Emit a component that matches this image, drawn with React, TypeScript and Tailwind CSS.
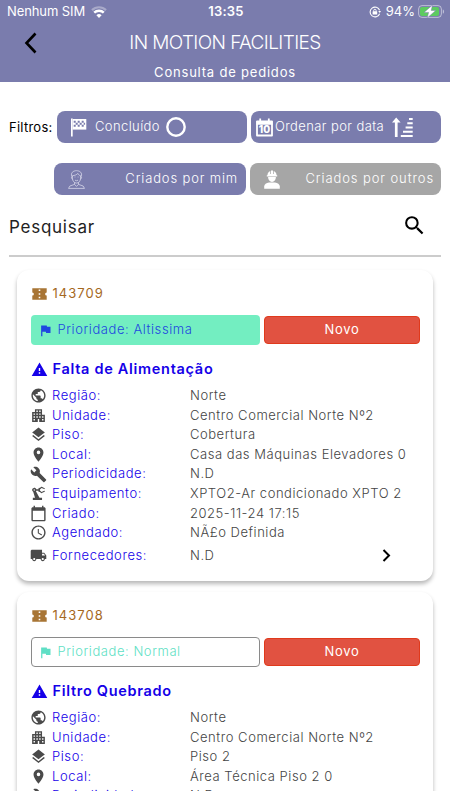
import type { ReactNode } from 'react';
import type { IconType } from 'react-icons';
import {
  MdAccessTime,
  MdApartment,
  MdBuild,
  MdCalendarToday,
  MdFlag,
  MdLayers,
  MdLocalShipping,
  MdPlace,
  MdPrecisionManufacturing,
  MdPublic,
  MdSearch,
  MdWarning,
} from 'react-icons/md';

interface Order {
  id: string;
  priority: string;
  urgent: boolean;
  title: string;
  values: string[];
}

const fields: { label: string; Icon: IconType }[] = [
  { label: 'Região:', Icon: MdPublic },
  { label: 'Unidade:', Icon: MdApartment },
  { label: 'Piso:', Icon: MdLayers },
  { label: 'Local:', Icon: MdPlace },
  { label: 'Periodicidade:', Icon: MdBuild },
  { label: 'Equipamento:', Icon: MdPrecisionManufacturing },
  { label: 'Criado:', Icon: MdCalendarToday },
  { label: 'Agendado:', Icon: MdAccessTime },
  { label: 'Fornecedores:', Icon: MdLocalShipping },
];

const orders: Order[] = [
  {
    id: '143709',
    priority: 'Altissima',
    urgent: true,
    title: 'Falta de Alimentação',
    values: [
      'Norte',
      'Centro Comercial Norte Nº2',
      'Cobertura',
      'Casa das Máquinas Elevadores 0',
      'N.D',
      'XPTO2-Ar condicionado XPTO 2',
      '2025-11-24 17:15',
      'NÃ£o Definida',
      'N.D',
    ],
  },
  {
    id: '143708',
    priority: 'Normal',
    urgent: false,
    title: 'Filtro Quebrado',
    values: ['Norte', 'Centro Comercial Norte Nº2', 'Piso 2', 'Área Técnica Piso 2 0', 'N.D'],
  },
];

function WifiIcon() {
  return (
    <svg width="16" height="12" viewBox="0 0 16 12" fill="none">
      <path d="M1 4.1a10 10 0 0 1 14 0" stroke="#fff" strokeOpacity=".35" strokeWidth="2.2" />
      <path d="M3.2 6.7a6.8 6.8 0 0 1 9.6 0" stroke="#fff" strokeWidth="2.4" />
      <path d="M8 12 5.4 9.3a3.7 3.7 0 0 1 5.2 0Z" fill="#fff" />
    </svg>
  );
}

function RotationLockIcon() {
  return (
    <svg width="12" height="12" viewBox="0 0 12 12" fill="none" stroke="#fff">
      <path d="M10.6 7.7A4.9 4.9 0 1 1 10.6 4.3" strokeWidth="1.1" />
      <path d="M9.2 5h2.8l-1.2 2Z" fill="#fff" stroke="none" />
      <rect x="3.6" y="5.2" width="4.6" height="3.4" rx=".5" fill="#fff" stroke="none" />
      <path d="M4.7 5.6V4.5a1.2 1.2 0 0 1 2.4 0v1.1" strokeWidth=".9" />
    </svg>
  );
}

function BatteryIcon() {
  return (
    <svg width="27" height="13" viewBox="0 0 27 13">
      <rect x=".6" y=".6" width="22.8" height="11.8" rx="3.4" fill="none" stroke="#fff" strokeOpacity=".5" />
      <rect x="2" y="2" width="19" height="9" rx="2" fill="#5ccb5f" />
      <path d="M24.8 4.4c1.7.5 1.7 3.7 0 4.2Z" fill="#fff" fillOpacity=".5" />
      <path d="M14.5 0 6 7.4h4.6L9.2 13l8.6-7.6h-4.6Z" fill="#fff" stroke="#7a7cad" strokeWidth=".5" />
    </svg>
  );
}

function CheckeredFlagIcon() {
  return (
    <svg width="16" height="19" viewBox="0 0 16 19" fill="#fff">
      <path d="M0 .6h1.7v17.8H0Z" />
      <path d="M1.7 1h13.6v10.6H1.7Z" />
      <g fill="#7a7cad">
        <path d="M2.7 2.8h2v2h-2ZM6.7 2.8h2v2h-2ZM10.7 2.8h2v2h-2ZM4.7 4.8h2v2h-2ZM8.7 4.8h2v2h-2ZM12.7 4.8h1.4v2h-1.4ZM2.7 6.8h2v2h-2ZM6.7 6.8h2v2h-2ZM10.7 6.8h2v2h-2Z" />
      </g>
    </svg>
  );
}

function DateIcon() {
  return (
    <span className="relative flex h-[19px] w-[17px] shrink-0 items-end justify-center">
      <svg className="absolute inset-0" width="17" height="19" viewBox="0 0 17 19" fill="none">
        <path d="M1 3.5h15v14H1Z" stroke="#fff" strokeWidth="1.8" strokeLinejoin="round" />
        <path d="M.5 3h16v3.7H.5ZM3.3.4h1.8V4H3.3ZM11.9.4h1.8V4h-1.8Z" fill="#fff" />
      </svg>
      <span className="relative mb-[3px] text-[10px] leading-[9px] font-extrabold tracking-normal">10</span>
    </span>
  );
}

function SortIcon() {
  return (
    <svg width="22" height="21" viewBox="0 0 22 21" fill="#fff">
      <path d="M4.2.5 8.6 5.4H5.6v14.7H2.9V5.4H0Z" />
      <path d="M17 1h3.7v2H17ZM15.3 5.2h5.4v2h-5.4ZM13.6 9.4h7.1v2h-7.1ZM11 13.7h9.7v2H11ZM8.8 18h11.9v2.1H8.8Z" />
    </svg>
  );
}

function PersonIcon() {
  return (
    <svg width="17" height="19" viewBox="0 0 17 19" fill="none" stroke="#d6d6e8" strokeWidth=".8">
      <path d="M3.7 6.3C2.6 3 5 .7 8.4.7c3.7 0 5.9 2.1 5 5.6" />
      <path d="M4.4 5.7v2.5c0 2.7 1.9 4.9 4.1 4.9s4.1-2.2 4.1-4.9V5.7C11 5.5 10.4 4.4 9.9 3.4 8.8 4.8 6.7 5.5 4.4 5.7Z" />
      <path d="M4.4 6.4c-1.3-.2-1.3 2.6.2 2.6M12.6 6.4c1.3-.2 1.3 2.6-.2 2.6M6.6 7h.8M9.7 7h.8M7 10.2q1.5 1 3 0" />
      <path d="M6.5 12.4v2L1.9 16 .5 18.4h16L15.1 16l-4.6-1.6v-2M6.5 14.4l2 2 2-2" />
    </svg>
  );
}

function WorkerIcon() {
  return (
    <svg width="16" height="19" viewBox="0 0 16 19" fill="#fff">
      <path d="M3.5 5.2A4.6 4.6 0 0 1 6.3.9V4h.7V.4h2V4h.7V.9a4.6 4.6 0 0 1 2.8 4.3h.7v1.2H2.8V5.2Z" />
      <path d="M4.1 7.1h7.8C11.9 9.8 10.1 12 8 12S4.1 9.8 4.1 7.1Z" />
      <path d="M.2 18.8v-2.4c0-2.3 2.2-3.5 4.8-4h6c2.6.5 4.8 1.7 4.8 4v2.4Z" />
    </svg>
  );
}

function TicketIcon() {
  return (
    <svg className="mr-[6px] ml-px" width="15" height="12" viewBox="0 0 15 12" fill="#a87535">
      <path
        fillRule="evenodd"
        d="M.3.2h14.4v4.2a1.6 1.6 0 0 0 0 3.2v4.2H.3V7.6a1.6 1.6 0 0 0 0-3.2ZM6.7 1.6v1.5h1.6V1.6ZM6.7 5.2v1.5h1.6V5.2ZM6.7 8.8v1.5h1.6V8.8Z"
      />
    </svg>
  );
}

function FilterButton({ className, children }: { className: string; children: ReactNode }) {
  return (
    <button className={`flex h-8 items-center rounded-lg text-[13px] text-white ${className}`}>
      {children}
    </button>
  );
}

function OrderCard({ order }: { order: Order }) {
  return (
    <div className="h-[311px] shrink-0 rounded-xl bg-white pt-[14px] pr-[13px] pl-[13.5px] shadow-[0_3px_4px_rgba(0,0,0,0.28)]">
      <div className="flex h-5 items-center text-[13px] tracking-[1.05px] text-[#a5681e]">
        <TicketIcon />
        {order.id}
      </div>

      <div className="mt-[11px] flex h-[30px] items-center gap-1">
        <div
          className={`flex h-[30px] w-[229px] items-center rounded text-[13px] font-light tracking-[0.56px] ${
            order.urgent ? 'bg-[#73eec1] pl-2 text-[#1f47e0]' : 'border border-[#8a8a8a] pl-[7px] text-[#5fdfc5]'
          }`}
        >
          <MdFlag className="mr-[5px] -ml-px size-[15px]" />
          Prioridade: {order.priority}
        </div>
        <div className="flex h-7 w-[156px] items-center justify-center rounded border border-[#e03a1c] bg-[#e15241] pl-px text-[13px] tracking-[0.65px] text-white">
          Novo
        </div>
      </div>

      <div className="mt-[14px] flex h-5 items-center text-[14.5px] font-semibold tracking-[0.7px] text-[#1500e8]">
        <MdWarning className="mr-[5px] size-[17px]" />
        {order.title}
      </div>

      <div className="mt-[7px]">
        {order.values.map((value, i) => {
          const { label, Icon } = fields[i];
          return (
            <div key={label} className="flex h-[19.6px] items-center text-[13px] font-light last:nth-9:mt-[3px]">
              <Icon className="mr-[5px] -ml-[0.5px] size-[17px] text-[#4a4a4a]" />
              <span className="w-[138px] tracking-[0.58px] text-[#1500e8]">{label}</span>
              <span className="tracking-[0.54px] whitespace-nowrap text-[#444]">{value}</span>
              {i === 8 && (
                <svg className="mr-[29px] ml-auto" width="9" height="13" viewBox="0 0 9 13" fill="none">
                  <path d="m1.5 1 5.5 5.5L1.5 12" stroke="#000" strokeWidth="2" />
                </svg>
              )}
            </div>
          );
        })}
      </div>
    </div>
  );
}

export default function App() {
  return (
    <div className="h-[800px] w-[450px] overflow-hidden bg-white font-['Inter','Liberation_Sans',sans-serif]">
      {/* Header */}
      <header className="h-[82px] bg-[#7a7cad] text-white">
        <div className="grid h-[23px] grid-cols-3 items-center pr-[5px] pl-[7px] text-[13px]">
          <div className="flex items-center gap-1.5 tracking-[-0.1px]">
            Nenhum SIM
            <WifiIcon />
          </div>
          <div className="text-center font-semibold tracking-[0.2px]">13:35</div>
          <div className="flex items-center justify-end">
            <RotationLockIcon />
            <span className="mr-[3px] ml-[5px]">94%</span>
            <BatteryIcon />
          </div>
        </div>
        <div className="grid h-10 grid-cols-[60px_1fr_60px] items-center">
          <button className="pl-6">
            <svg width="14" height="22" viewBox="0 0 14 22" fill="none">
              <path d="m11.5 1.5-9 9.5 9 9.5" stroke="#000" strokeWidth="2.6" />
            </svg>
          </button>
          <h1 className="text-center text-[19px] font-light tracking-[-0.6px]">IN MOTION FACILITIES</h1>
        </div>
        <p className="text-center text-[13px] leading-[18px] tracking-[0.8px]">Consulta de pedidos</p>
      </header>

      {/* Filters */}
      <div className="mt-[29px] flex items-center pl-[9px]">
        <span className="w-12 pt-px text-[13px] tracking-[0.25px] whitespace-nowrap text-black">Filtros:</span>
        <FilterButton className="w-[190px] bg-[#7a7cad] pl-3.5 font-light tracking-[0.4px]">
          <CheckeredFlagIcon />
          <span className="mr-1.5 ml-2">Concluído</span>
          <svg width="20" height="20" viewBox="0 0 20 20">
            <circle cx="10" cy="10" r="8.7" fill="none" stroke="#fff" strokeWidth="2.4" />
          </svg>
        </FilterButton>
        <FilterButton className="ml-1 w-[190px] bg-[#7a7cad] pl-[5px] font-light tracking-[0.4px]">
          <DateIcon />
          <span className="mr-2 ml-[2px] whitespace-nowrap">Ordenar por data</span>
          <SortIcon />
        </FilterButton>
      </div>
      <div className="mt-5 flex pl-[54px]">
        <FilterButton className="w-[192px] justify-between bg-[#7a7cad] pr-2 pl-3.5 font-light tracking-[0.85px]">
          <PersonIcon />
          Criados por mim
        </FilterButton>
        <FilterButton className="ml-1 w-[191px] justify-between bg-[#a6a6a6] pr-[7px] pl-3.5 font-light tracking-[0.9px]">
          <WorkerIcon />
          Criados por outros
        </FilterButton>
      </div>

      {/* Search */}
      <div className="mx-[9px] flex h-[62px] items-center justify-between border-b-2 border-[#ccc] pr-3.5 text-[17px] tracking-[0.75px] text-[#222]">
        <span className="pt-[5px]">Pesquisar</span>
        <MdSearch className="size-[25px] text-black" />
      </div>

      {/* Orders */}
      <div className="flex h-[534px] flex-col gap-[11px] overflow-hidden pt-[13px] pr-[17px] pl-[17px]">
        {orders.map((order) => (
          <OrderCard key={order.id} order={order} />
        ))}
      </div>
    </div>
  );
}
